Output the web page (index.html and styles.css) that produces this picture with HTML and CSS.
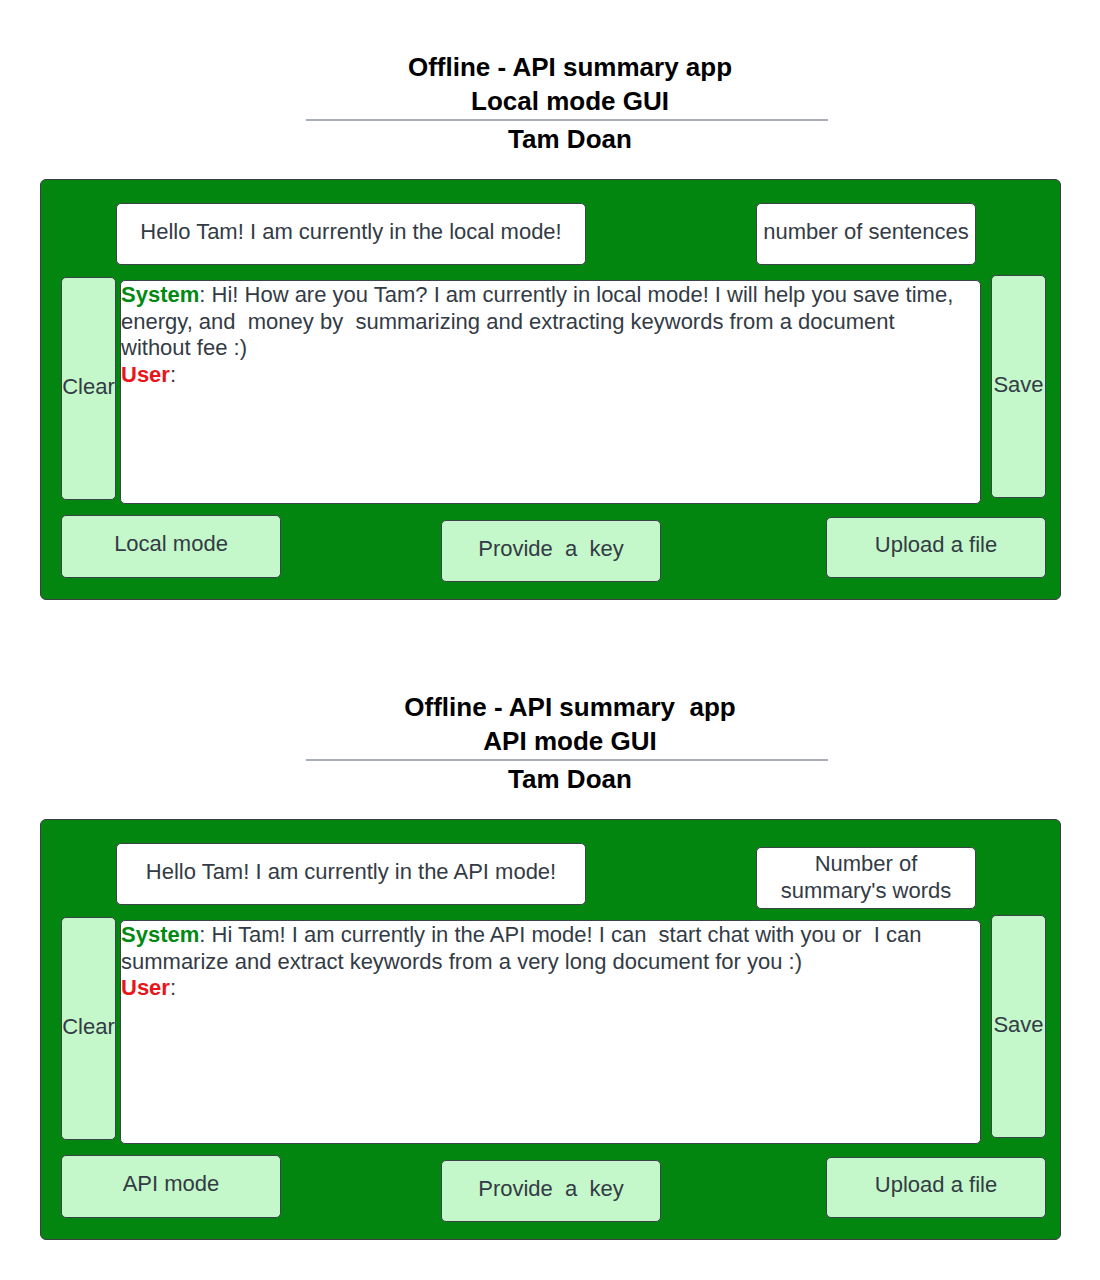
FILE: index.html
```html
<!DOCTYPE html>
<html>
<head>
<meta charset="utf-8">
<link rel="stylesheet" href="styles.css">
</head>
<body>
<section class="section">
  <header class="head">
    <div class="title">Offline - API summary app</div>
    <div class="title title-rule">Local mode GUI</div>
    <div class="title">Tam Doan</div>
  </header>
  <div class="panel">
    <div class="row row-top">
      <div class="box hello">Hello Tam! I am currently in the local mode!</div>
      <div class="box param">number of sentences</div>
    </div>
    <div class="row row-mid">
      <div class="btn side clear">Clear</div>
      <div class="chat"><span class="sys">System</span>: Hi! How are you Tam? I am currently in local mode! I will help you save time, energy, and&nbsp; money by&nbsp; summarizing and extracting keywords from a document without fee :)<br><span class="usr">User</span>:</div>
      <div class="btn side save">Save</div>
    </div>
    <div class="row row-bot">
      <div class="btn wide mode">Local mode</div>
      <div class="btn wide key">Provide&nbsp; a&nbsp; key</div>
      <div class="btn wide upload">Upload a file</div>
    </div>
  </div>
</section>

<section class="section second">
  <header class="head">
    <div class="title">Offline - API summary&nbsp; app</div>
    <div class="title title-rule">API mode GUI</div>
    <div class="title">Tam Doan</div>
  </header>
  <div class="panel">
    <div class="row row-top">
      <div class="box hello">Hello Tam! I am currently in the API mode!</div>
      <div class="box param param2">Number of<br>summary's words</div>
    </div>
    <div class="row row-mid">
      <div class="btn side clear">Clear</div>
      <div class="chat"><span class="sys">System</span>: Hi Tam! I am currently in the API mode! I can&nbsp; start chat with you or&nbsp; I can summarize and extract keywords from a very long document for you :)<br><span class="usr">User</span>:</div>
      <div class="btn side save">Save</div>
    </div>
    <div class="row row-bot">
      <div class="btn wide mode">API mode</div>
      <div class="btn wide key">Provide&nbsp; a&nbsp; key</div>
      <div class="btn wide upload">Upload a file</div>
    </div>
  </div>
</section>
</body>
</html>
```

FILE: styles.css
```css
* { box-sizing: border-box; }

body {
  margin: 0;
  background: #ffffff;
  font-family: "Liberation Sans", Arial, sans-serif;
  color: #333b45;
}

.section {
  padding-top: 50px;
}

.second {
  padding-top: 90px;
}

.head {
  width: 522px;
  margin-left: 306px;
  text-align: center;
  color: #000000;
}

.title {
  font-weight: bold;
  font-size: 26px;
  line-height: 34px;
  padding-left: 6px;
  white-space: nowrap;
}

.title-rule {
  border-bottom: 2px solid #a9adb6;
  padding-bottom: 1px;
  margin-bottom: 1px;
}

.panel {
  width: 1021px;
  height: 421px;
  margin-top: 23px;
  margin-left: 40px;
  background: #02860f;
  border: 1px solid #3a3f44;
  border-radius: 6px;
}

.row {
  display: flex;
  align-items: flex-start;
}

.row-top {
  margin-top: 23px;
  height: 62px;
}

.box {
  background: #ffffff;
  border: 1px solid #3c4249;
  border-radius: 5px;
  font-size: 22px;
  display: flex;
  align-items: center;
  justify-content: center;
  text-align: center;
  padding-bottom: 5px;
  white-space: nowrap;
}

.hello {
  margin-left: 75px;
  width: 470px;
  height: 62px;
}

.param {
  margin-left: auto;
  margin-right: 84px;
  width: 220px;
  height: 62px;
}

.param2 {
  margin-top: 4px;
  line-height: 27px;
  padding-bottom: 2px;
}

.row-mid {
  margin-top: 10px;
  height: 228px;
}

.btn {
  background: #c4f7c9;
  border: 1px solid #3c4249;
  border-radius: 5px;
  font-size: 22px;
  display: flex;
  align-items: center;
  justify-content: center;
  white-space: nowrap;
  color: #333b45;
}

.side {
  width: 55px;
  height: 223px;
  padding-bottom: 4px;
}

.clear {
  margin-left: 20px;
  margin-top: 2px;
}

.save {
  margin-left: 10px;
  height: 223px;
}

.chat {
  margin-left: 4px;
  margin-top: 5px;
  width: 861px;
  height: 224px;
  background: #ffffff;
  border: 1px solid #3c4249;
  border-radius: 5px;
  font-size: 22px;
  line-height: 26.5px;
  padding: 1px 18px 0 0;
  text-align: left;
}

.sys {
  color: #028a10;
  font-weight: bold;
}

.usr {
  color: #e8151b;
  font-weight: bold;
}

.row-bot {
  margin-top: 12px;
}

.wide {
  width: 220px;
  height: 63px;
  padding-bottom: 6px;
}

.mode {
  margin-left: 20px;
}

.key {
  margin-left: 160px;
  margin-top: 5px;
  height: 62px;
  padding-bottom: 4px;
}

.upload {
  margin-left: 165px;
  margin-top: 2px;
  height: 61px;
}
```
